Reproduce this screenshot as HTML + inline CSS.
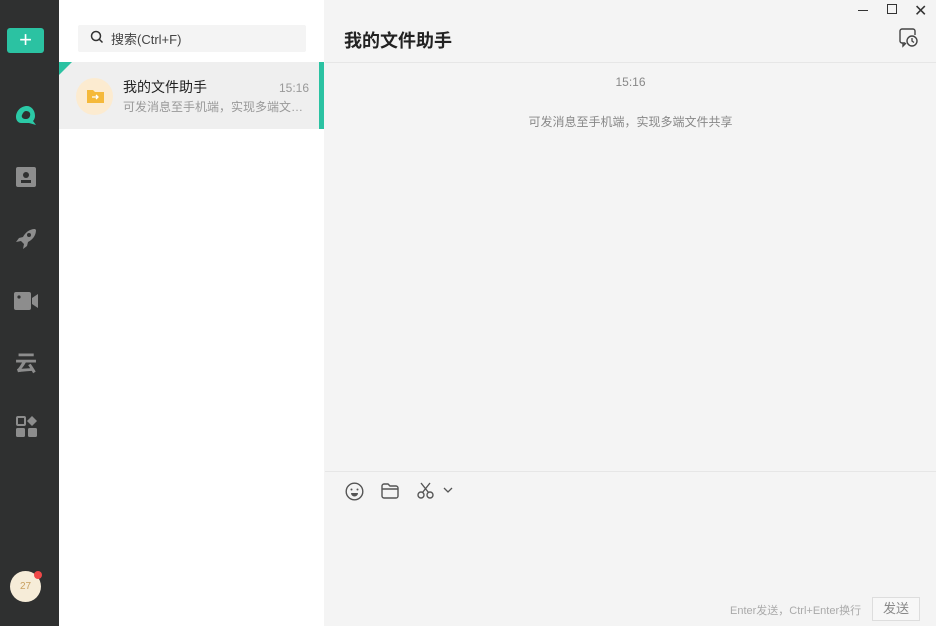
<!DOCTYPE html>
<html><head><meta charset="utf-8"><style>
*{margin:0;padding:0;box-sizing:border-box}
body{width:936px;height:626px;overflow:hidden;font-family:"Liberation Sans","Noto Sans CJK SC",sans-serif;background:#f4f4f4;position:relative}
.side{position:absolute;left:0;top:0;width:59px;height:626px;background:#2f3030}
.list{position:absolute;left:59px;top:0;width:265px;height:626px;background:#fff}
.main{position:absolute;left:325px;top:0;width:611px;height:626px;background:#f4f4f4}
.abs{position:absolute}
</style></head><body>
<div class="side">
 <div class="abs" style="left:7px;top:28px;width:37px;height:25px;background:#2bc2a2;border-radius:3px;color:#fff;font-size:22px;line-height:24px;text-align:center">+</div>
 <svg class="abs" style="left:14px;top:104px" width="24" height="24" viewBox="0 0 24 24"><path d="M13 2C7 2 2 7 2 13c0 3 2 6 5 6h8l7 2-3-4c1-1 2-3 2-5 0-6-4-10-8-10zm-1 5c3 0 5 2 4 5s-3 3-5 3-4-2-3-4 2-4 4-4z" fill="#2bc9a6"/></svg>
 <svg class="abs" style="left:16px;top:167px" width="20" height="20" viewBox="0 0 20 20"><rect width="20" height="20" rx="2" fill="#8d8d8d"/><circle cx="10" cy="8" r="3" fill="#2f3030"/><rect x="5" y="13" width="10" height="3" fill="#2f3030"/></svg>
 <svg class="abs" style="left:14px;top:227px" width="24" height="24" viewBox="0 0 24 24"><path d="M21 2c-6 0-10 4-12 8l-4 1-3 4 5-1 3 3-1 5 4-3 1-4c4-2 8-6 8-12z" fill="#8d8d8d"/><circle cx="15" cy="8" r="2" fill="#2f3030"/></svg>
 <svg class="abs" style="left:14px;top:292px" width="25" height="18" viewBox="0 0 25 18"><rect width="17" height="18" rx="2" fill="#8d8d8d"/><circle cx="5" cy="5" r="1.6" fill="#2f3030"/><path d="M18 6l6-4v14l-6-4z" fill="#8d8d8d"/></svg>
 <div class="abs" style="left:15px;top:352px;color:#8d8d8d;font-size:22px;font-weight:bold;line-height:24px">云</div>
 <svg class="abs" style="left:16px;top:416px" width="21" height="21" viewBox="0 0 21 21"><rect x="1" y="1" width="8" height="8" rx="1" fill="none" stroke="#8d8d8d" stroke-width="2"/><path d="M16 0l5 5-5 5-5-5z" fill="#8d8d8d"/><rect x="0" y="12" width="9" height="9" rx="1.5" fill="#8d8d8d"/><rect x="12" y="12" width="9" height="9" rx="1.5" fill="#8d8d8d"/></svg>
 <div class="abs" style="left:10px;top:571px;width:31px;height:31px;border-radius:50%;background:#f6ecd8;color:#c9a060;font-size:10px;line-height:31px;text-align:center">27</div>
 <div class="abs" style="left:34px;top:571px;width:8px;height:8px;border-radius:50%;background:#f04848"></div>
</div>
<div class="list">
 <div class="abs" style="left:19px;top:25px;width:228px;height:27px;background:#f4f4f4;border-radius:2px"></div>
 <svg class="abs" style="left:31px;top:30px" width="14" height="14" viewBox="0 0 14 14"><circle cx="6" cy="6" r="4.5" fill="none" stroke="#333" stroke-width="1.5"/><path d="M9.5 9.5l3 3" stroke="#333" stroke-width="1.5"/></svg>
 <div class="abs" style="left:52px;top:29px;font-size:13px;color:#444">搜索(Ctrl+F)</div>
 <div class="abs" style="left:0;top:62px;width:265px;height:67px;background:#efefef"></div>
 <div class="abs" style="left:0;top:62px;width:0;height:0;border-top:13px solid #2bc2a2;border-right:13px solid transparent"></div>
 <div class="abs" style="left:260px;top:62px;width:5px;height:67px;background:#2bc2a2"></div>
 <div class="abs" style="left:17px;top:78px;width:37px;height:37px;border-radius:50%;background:#fcebd0"></div>
 <svg class="abs" style="left:28px;top:88px" width="17" height="15" viewBox="0 0 17 15"><path d="M0 2h6l2 2h9v11H0z" fill="#f5b93a"/><path d="M5 9h6m-2-2l2 2-2 2" stroke="#fff" stroke-width="1.3" fill="none"/></svg>
 <div class="abs" style="left:64px;top:77px;font-size:14px;color:#222">我的文件助手</div>
 <div class="abs" style="left:220px;top:81px;font-size:12px;color:#999">15:16</div>
 <div class="abs" style="left:64px;top:98px;font-size:12px;color:#999">可发消息至手机端，实现多端文…</div>
</div>
<div class="main">
 <div class="abs" style="left:19px;top:27px;font-size:18px;font-weight:bold;color:#222">我的文件助手</div>
 <div class="abs" style="left:533px;top:10px;width:10px;height:1.3px;background:#333"></div>
 <div class="abs" style="left:562px;top:4px;width:10px;height:10px;border:1.3px solid #333"></div>
 <div class="abs" style="left:589px;top:1px;font-size:16px;color:#333">✕</div>
 <svg class="abs" style="left:574px;top:28px" width="20" height="20" viewBox="0 0 20 20"><path d="M6 15H3a2 2 0 0 1-2-2V3a2 2 0 0 1 2-2h11a2 2 0 0 1 2 2v4" fill="none" stroke="#444" stroke-width="1.4"/><path d="M4 15l0 3 3-3" fill="none" stroke="#444" stroke-width="1.4"/><circle cx="13" cy="13" r="5" fill="#f4f4f4" stroke="#444" stroke-width="1.4"/><path d="M13 10v3l2 1.5" stroke="#444" stroke-width="1.3" fill="none"/></svg>
 <div class="abs" style="left:0;top:62px;width:611px;height:1px;background:#e6e6e6"></div>
 <div class="abs" style="left:0;top:75px;width:611px;text-align:center;font-size:12px;color:#888">15:16</div>
 <div class="abs" style="left:0;top:113px;width:611px;text-align:center;font-size:12px;color:#888">可发消息至手机端，实现多端文件共享</div>
 <div class="abs" style="left:0;top:471px;width:611px;height:1px;background:#e6e6e6"></div>
 <svg class="abs" style="left:20px;top:482px" width="19" height="19" viewBox="0 0 19 19"><circle cx="9.5" cy="9.5" r="8.3" fill="none" stroke="#555" stroke-width="1.4"/><circle cx="6.5" cy="7.5" r="1" fill="#555"/><circle cx="12.5" cy="7.5" r="1" fill="#555"/><path d="M6 11h7a3.5 3.5 0 0 1-7 0z" fill="#555"/></svg>
 <svg class="abs" style="left:56px;top:483px" width="18" height="16" viewBox="0 0 18 16"><path d="M1 3a2 2 0 0 1 2-2h4l2 2h6a2 2 0 0 1 2 2v8a2 2 0 0 1-2 2H3a2 2 0 0 1-2-2z M1 6h16" fill="none" stroke="#555" stroke-width="1.4"/></svg>
 <svg class="abs" style="left:92px;top:482px" width="18" height="18" viewBox="0 0 18 18"><circle cx="4" cy="13" r="3" fill="none" stroke="#555" stroke-width="1.4"/><circle cx="13" cy="13" r="3" fill="none" stroke="#555" stroke-width="1.4"/><path d="M5.5 10.5L13 1M11.5 10.5L4 1" stroke="#555" stroke-width="1.4"/></svg>
 <svg class="abs" style="left:118px;top:487px" width="10" height="7" viewBox="0 0 10 7"><path d="M1 1l4 4 4-4" fill="none" stroke="#555" stroke-width="1.3"/></svg>
 <div class="abs" style="left:405px;top:602px;font-size:11px;color:#aaa">Enter发送，Ctrl+Enter换行</div>
 <div class="abs" style="left:547px;top:597px;width:48px;height:24px;border:1px solid #ddd;background:#f7f7f7;font-size:13px;color:#888;text-align:center;line-height:22px">发送</div>
</div>
</body></html>
